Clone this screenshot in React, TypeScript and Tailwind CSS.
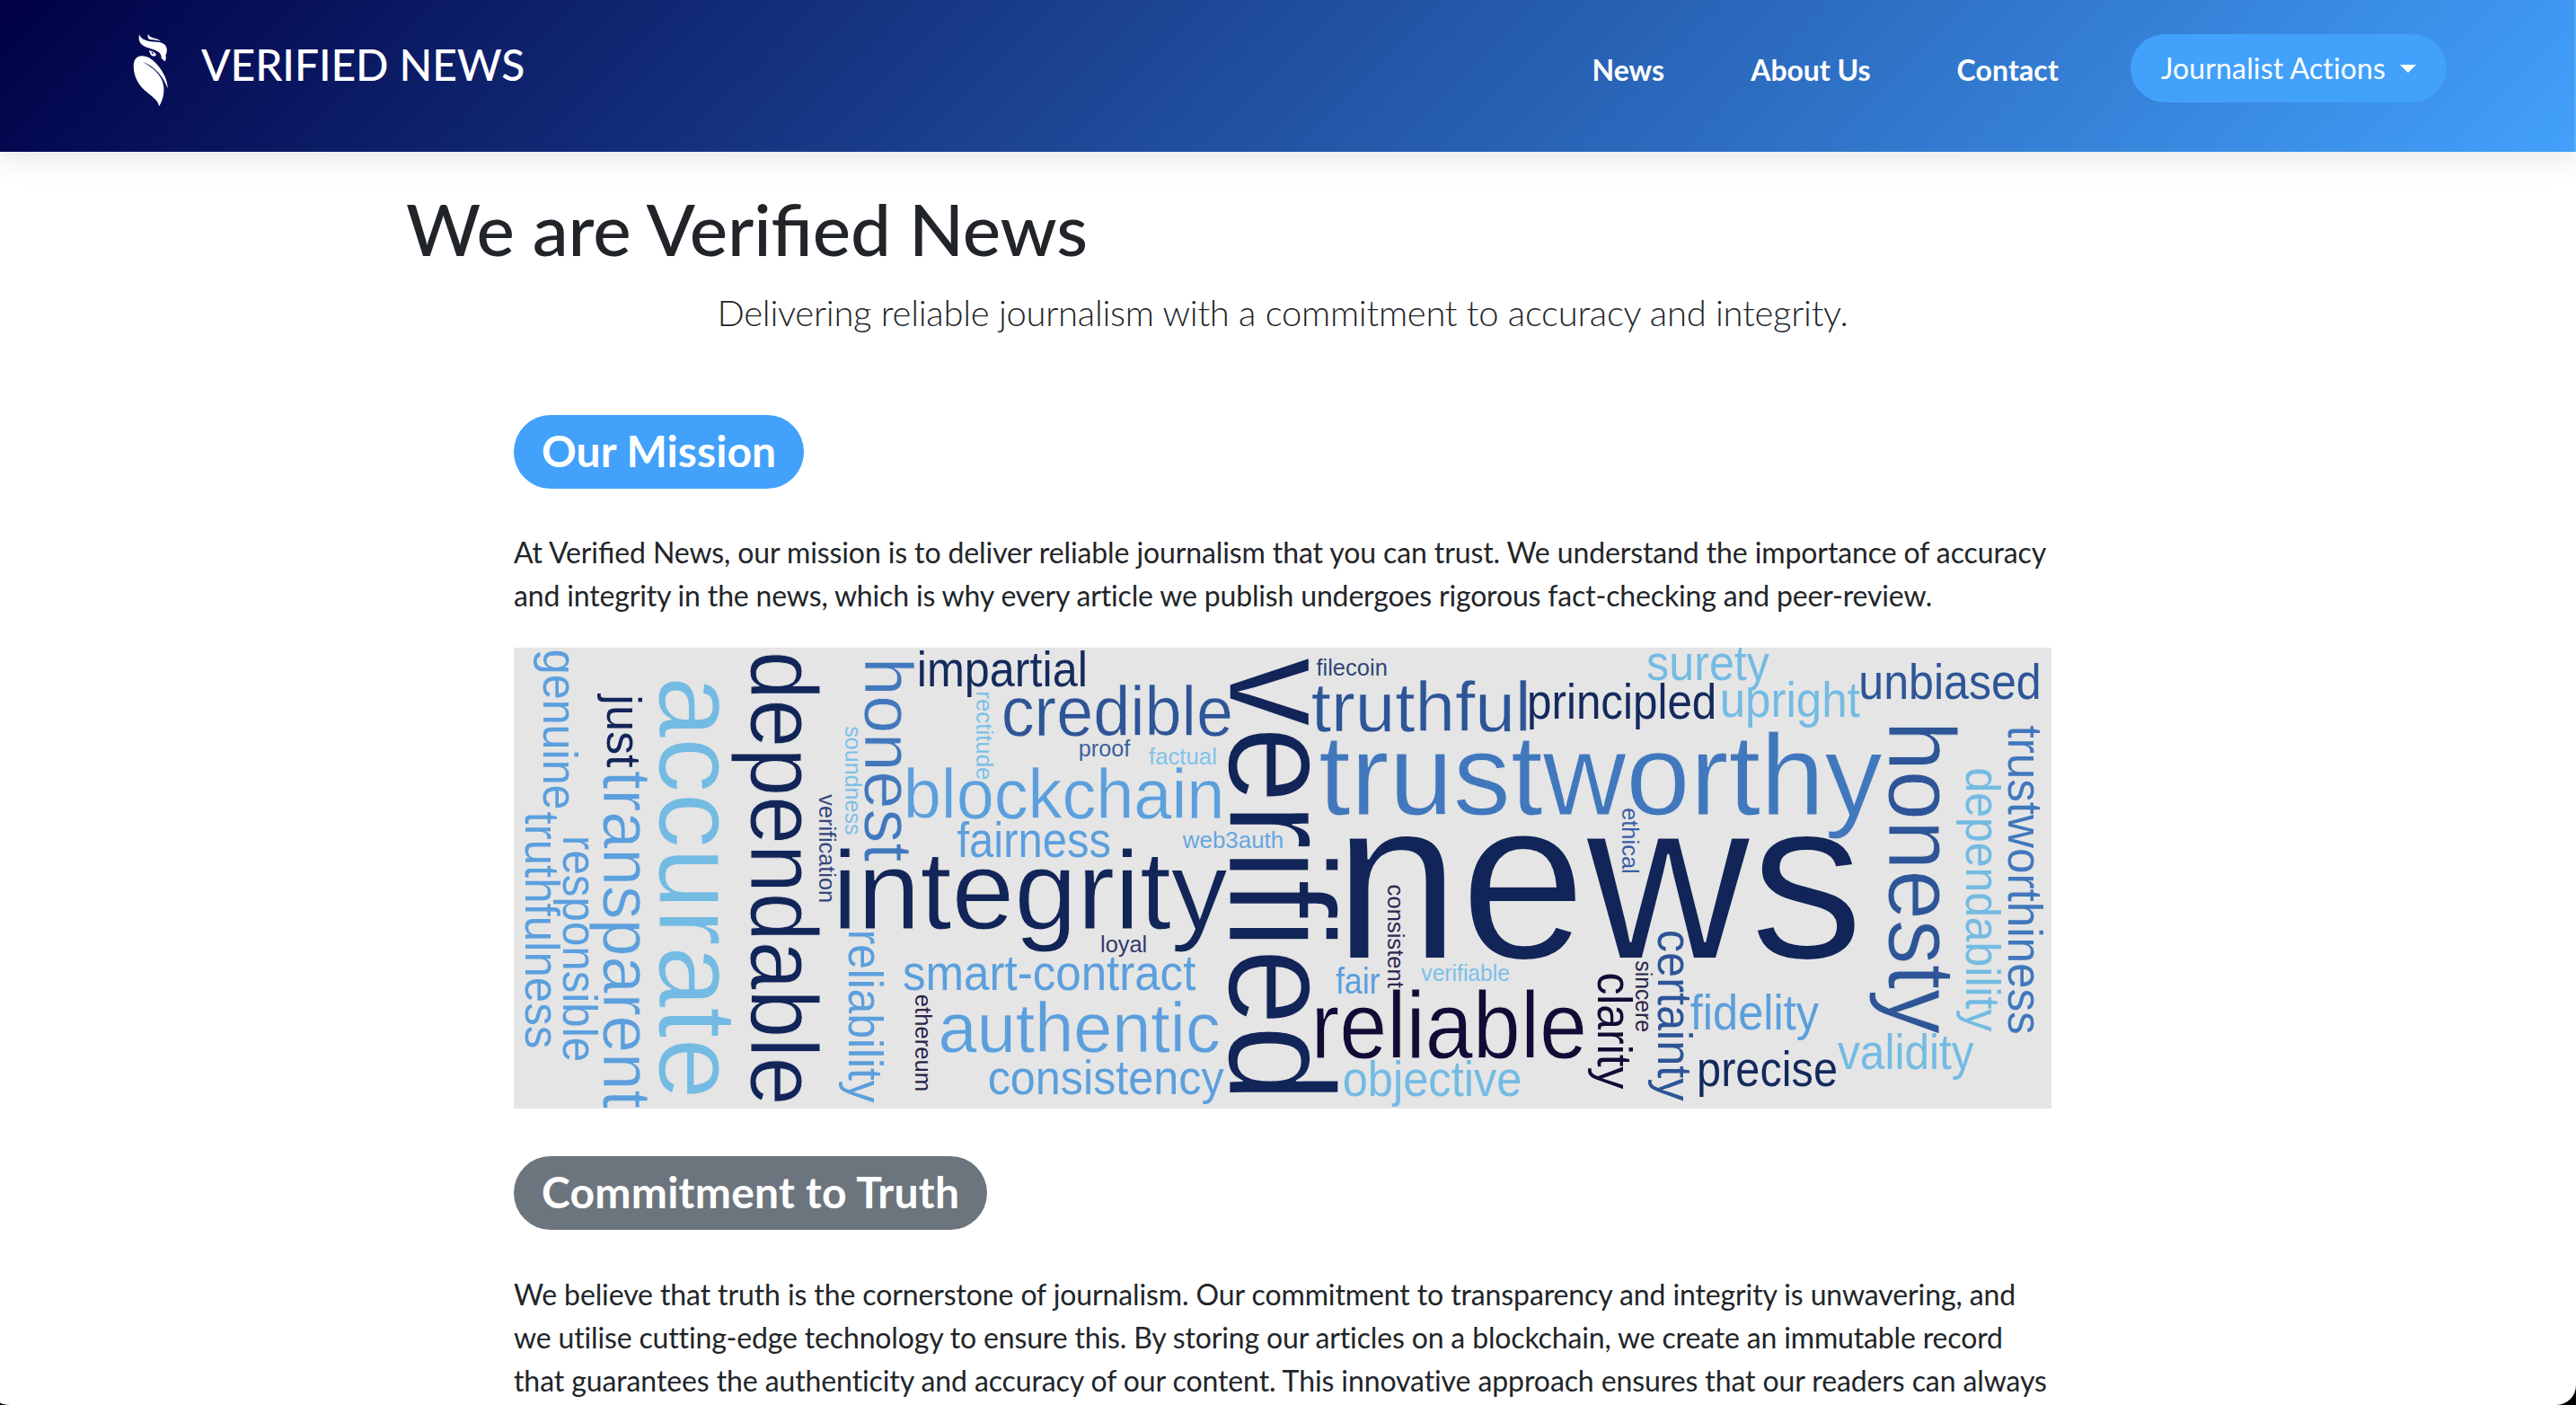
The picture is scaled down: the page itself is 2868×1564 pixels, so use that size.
import React, { useMemo } from "react";

type Word = {
  text: string;
  /** Ink start and end along the reading direction. */
  from: number;
  to: number;
  /** Baseline: a y for horizontal words, an x for vertical ones. */
  base: number;
  size: number;
  fill: string;
  vertical?: boolean;
};

const NAVY = "#122558";
const ROYAL = "#2d5597";
const BLUE = "#4178bd";
const SKY = "#5b9fdd";
const PALE = "#74bbe3";
const INK = "#130a35";
const PANEL = "#e5e5e5";

const h = (text: string, from: number, to: number, base: number, size: number, fill: string): Word => ({ text, from, to, base, size, fill });
const v = (text: string, from: number, to: number, base: number, size: number, fill: string): Word => ({ text, from, to, base, size, fill, vertical: true });

const WORDS: Word[] = [
  v("genuine", 3.3, 172.3, 33.3, 54, SKY),
  v("truthfulness", 177, 429.7, 12.7, 54, SKY),
  v("responsible", 205, 444, 54.7, 54, SKY),
  v("just", 49, 128.7, 104, 53, NAVY),
  v("transparent", 133, 496, 100.3, 76, SKY),
  v("accurate", 35, 481.3, 162, 124, PALE),
  v("dependable", 7, 489, 264, 106, NAVY),
  v("soundness", 84.7, 200.7, 368.7, 26, "#7cc0e8"),
  v("verification", 157.7, 273, 340, 26, "#34487c"),
  v("honest", 15.3, 230, 391, 76, BLUE),
  v("reliability", 306.3, 490, 373, 54, SKY),
  h("integrity", 363, 794.7, 302.3, 120, NAVY),
  h("impartial", 452, 635.7, 41.7, 53.5, "#152a5c"),
  v("rectitude", 48, 141.3, 515.3, 26, "#7cc0e8"),
  h("credible", 545.7, 798, 94.7, 75, ROYAL),
  h("proof", 630.3, 686.3, 116.7, 25.5, "#3d5d9c"),
  h("factual", 707.3, 781.3, 125, 25.5, "#82c3e9"),
  h("blockchain", 438.3, 786.7, 183.3, 75, SKY),
  h("fairness", 494, 663.3, 225.3, 53, SKY),
  h("web3auth", 744.7, 855.7, 215.3, 25.5, "#67a7e0"),
  h("loyal", 654.7, 703.7, 327.3, 25.5, "#33396b"),
  h("smart-contract", 434.3, 759.3, 368.3, 53, SKY),
  v("ethereum", 374, 476.3, 447, 26, "#2a2346"),
  h("authentic", 475.7, 784.7, 435.3, 75, SKY),
  h("consistency", 529.7, 790.7, 480.7, 52, SKY),
  v("verified", 10.3, 480, 797.3, 166.5, NAVY),
  h("filecoin", 893.7, 971.3, 30, 25.5, "#2f4678"),
  h("truthful", 889, 1127.7, 89.3, 75, ROYAL),
  h("principled", 1131, 1336.3, 75.7, 53.5, "#142a5e"),
  h("surety", 1262.3, 1398, 34.7, 53, PALE),
  h("upright", 1345.7, 1498.7, 74, 53.5, PALE),
  h("unbiased", 1500.3, 1697.7, 55, 53.5, ROYAL),
  h("trustworthy", 898, 1523.7, 179.7, 124, BLUE),
  h("news", 929.3, 1494, 334.7, 246, NAVY),
  v("consistent", 255.7, 366.3, 973.3, 26, "#2f2850"),
  v("ethical", 173, 241.7, 1234, 26, "#3a5fa5"),
  h("fair", 915.3, 964, 372, 39, SKY),
  h("verifiable", 1010.3, 1108, 358.3, 25.5, "#7cc0e8"),
  h("reliable", 893.7, 1191.3, 441.7, 102, INK),
  h("objective", 924.7, 1120.3, 482.3, 53, PALE),
  v("clarity", 351.3, 475.3, 1207.3, 54, INK),
  v("sincere", 337.3, 413, 1249.3, 26, "#2b2346"),
  v("certainty", 305.3, 488, 1274, 54, ROYAL),
  h("fidelity", 1310.3, 1453, 410.7, 53, SKY),
  h("precise", 1320, 1472, 472, 53, "#142a5e"),
  h("validity", 1474, 1625.7, 453.7, 53, PALE),
  v("honesty", 84.7, 415.7, 1530.7, 106, ROYAL),
  v("dependability", 130.7, 413.3, 1616.7, 54, PALE),
  v("trustworthiness", 84, 414.7, 1664.3, 54, BLUE),
];

const CLOUD_FONT = '"Liberation Sans", Arial, sans-serif';

/** Stretches each word so that its ink spans exactly from `from` to `to`. */
function placeWords(): { word: Word; transform: string }[] {
  const ctx = document.createElement("canvas").getContext("2d")!;
  return WORDS.map((word) => {
    ctx.font = `200px ${CLOUD_FONT}`;
    const m = ctx.measureText(word.text);
    const k = word.size / 200;
    const left = -m.actualBoundingBoxLeft * k;
    const right = m.actualBoundingBoxRight * k;
    const sx = (word.to - word.from) / (right - left);
    const start = word.from - left * sx;
    const transform = word.vertical
      ? `translate(${word.base} ${start}) rotate(90) scale(${sx} 1)`
      : `translate(${start} ${word.base}) scale(${sx} 1)`;
    return { word, transform };
  });
}

function WordCloud() {
  const placed = useMemo(placeWords, []);
  return (
    <svg
      viewBox="0 -0.4 1712 496.5"
      preserveAspectRatio="none"
      className="block h-[513px] w-[1712px] bg-[#e5e5e5]"
      fontFamily={CLOUD_FONT}
      role="img"
    >
      {placed.map(({ word, transform }) => (
        <text
          key={word.text}
          transform={transform}
          fontSize={word.size}
          fill={word.fill}
          stroke={word.size > 70 ? PANEL : "none"}
          strokeWidth={word.size * 0.008}
          style={{ fontVariantLigatures: "none" }}
        >
          {word.text}
        </text>
      ))}
    </svg>
  );
}

function BirdLogo() {
  return (
    <svg viewBox="0 0 100 110" className="h-[110px] w-[100px]" fill="#fff">
      <path d="M35.2 18.3C33.9 23 34.8 27.6 39 30.6C43.5 33.8 51 34.4 56 37.6C58.6 39.3 60 42 59.6 45C61.5 45.4 62.2 48.2 63.6 48.2C65.2 46.5 64.9 43.5 64.4 41.5C66.3 38.5 66.6 33 63.5 29.8C59 25.6 50.5 27.6 43.5 25.3C38.5 23.7 36 21.5 35.2 18.3Z" />
      <path d="M44.8 17.8C44 20.8 44.8 23.4 47 24C50 24.6 54.5 24 58.8 26.2C56.5 23.2 53.5 23.2 50 22C47 21 45.2 19.8 44.8 17.8Z" />
      <path
        d="M45.8 36.2C46.8 38.6 47.4 41.4 50 42.4C51.7 43 53.6 42.4 53.8 40.4C52.4 38 49.5 36.8 45.8 36.2ZM48.2 37.6L51.2 39L49.9 40.6Z"
        fillRule="evenodd"
      />
      <path d="M37 42.3C31 42.8 28.3 48 28.8 55.5C29.4 65 33.5 73.5 41 80.5C48.5 87 55.5 90.5 57.2 98.2C60.5 93 62.6 86 62.4 79C62.2 67.5 55 58 38.8 48.8C52.5 54 62.5 66 66.5 78.5C67 69.5 61.5 59.5 55.5 52.5C50 46 43.5 41.8 37 42.3Z" />
    </svg>
  );
}

/** Letter-spacing switches ligatures off, so the "fi" pair opts out of it. */
function Verified() {
  return (
    <>
      Veri<span className="tracking-normal">fi</span>ed
    </>
  );
}

function Header() {
  return (
    <header className="relative flex h-[169px] items-start justify-between bg-[linear-gradient(135deg,#000046,#42a1fb)] pr-[144px] pl-[120px] text-white shadow-[0_8px_32px_rgba(0,0,0,0.1)]">
      <div className="flex">
        <div className="pt-5">
          <BirdLogo />
        </div>
        <span className="mt-[42px] ml-[4px] text-[48px] leading-[60px] font-medium tracking-[-0.1px]">VERIFIED NEWS</span>
      </div>
      <nav className="flex items-start pt-[38px] text-[32px] leading-[48px]">
        <a className="mt-4 font-bold tracking-[0.05px]">News</a>
        <a className="mt-4 ml-[96px] font-bold tracking-[-0.05px]">About Us</a>
        <a className="mt-4 ml-24 font-bold tracking-[0.15px]">Contact</a>
        <button className="ml-20 flex h-[76px] w-[352px] items-center justify-center rounded-full bg-[#42a1fb] tracking-[0.14px]">
          Journalist Actions
          <span className="ml-4 border-x-[9px] border-t-[9px] border-x-transparent border-t-white" />
        </button>
      </nav>
      <span className="absolute inset-y-0 right-0 w-[2px] bg-white/15" />
    </header>
  );
}

export default function App() {
  return (
    <div className="bg-black">
      <div className="h-[1564px] overflow-hidden rounded-br-[22px] bg-white font-[Lato,sans-serif] text-[#212529] [border-bottom-left-radius:12px_3px]">
        <Header />
        <h1 className="pt-[37px] pl-[452px] text-[80px] leading-[96px] font-medium tracking-[-0.15px] whitespace-nowrap">
          We are <Verified /> News
        </h1>
        <main className="ml-[572px] w-[1712px]">
          <p className="mt-4 text-center text-[40px] leading-[60px] font-light tracking-[-0.28px]">
            Delivering reliable journalism with a commitment to accuracy and integrity.
          </p>
          <h2 className="mt-[84px] flex h-[82px] w-fit items-center rounded-full bg-[#42a1fb] px-[31px] pb-[2px] text-[48px] font-bold tracking-[0.08px] text-white">
            Our Mission
          </h2>
          <p className="mt-[47px] text-[32px] leading-[48px] tracking-[-0.11px] whitespace-nowrap">
            At <Verified /> News, our mission is to deliver reliable journalism that you can trust. We understand the importance of accuracy
            <br />
            <span className="tracking-[-0.16px]">
              and integrity in the news, which is why every article we publish undergoes rigorous fact-checking and peer-review.
            </span>
          </p>
          <div className="mt-[34px]">
            <WordCloud />
          </div>
          <h2 className="mt-[53px] flex h-[82px] w-fit items-center rounded-full bg-[#6c757d] px-[31px] pb-[2px] text-[48px] font-bold tracking-[0.24px] text-white">
            Commitment to Truth
          </h2>
          <p className="mt-[48px] text-[32px] leading-[48px] tracking-[-0.11px] whitespace-nowrap">
            We believe that truth is the cornerstone of journalism. Our commitment to transparency and integrity is unwavering, and
            <br />
            <span className="tracking-[-0.155px]">
              we utilise cutting-edge technology to ensure this. By storing our articles on a blockchain, we create an immutable record
            </span>
            <br />
            <span className="tracking-[-0.1px]">
              that guarantees the authenticity and accuracy of our content. This innovative approach ensures that our readers can always
            </span>
          </p>
        </main>
      </div>
    </div>
  );
}
